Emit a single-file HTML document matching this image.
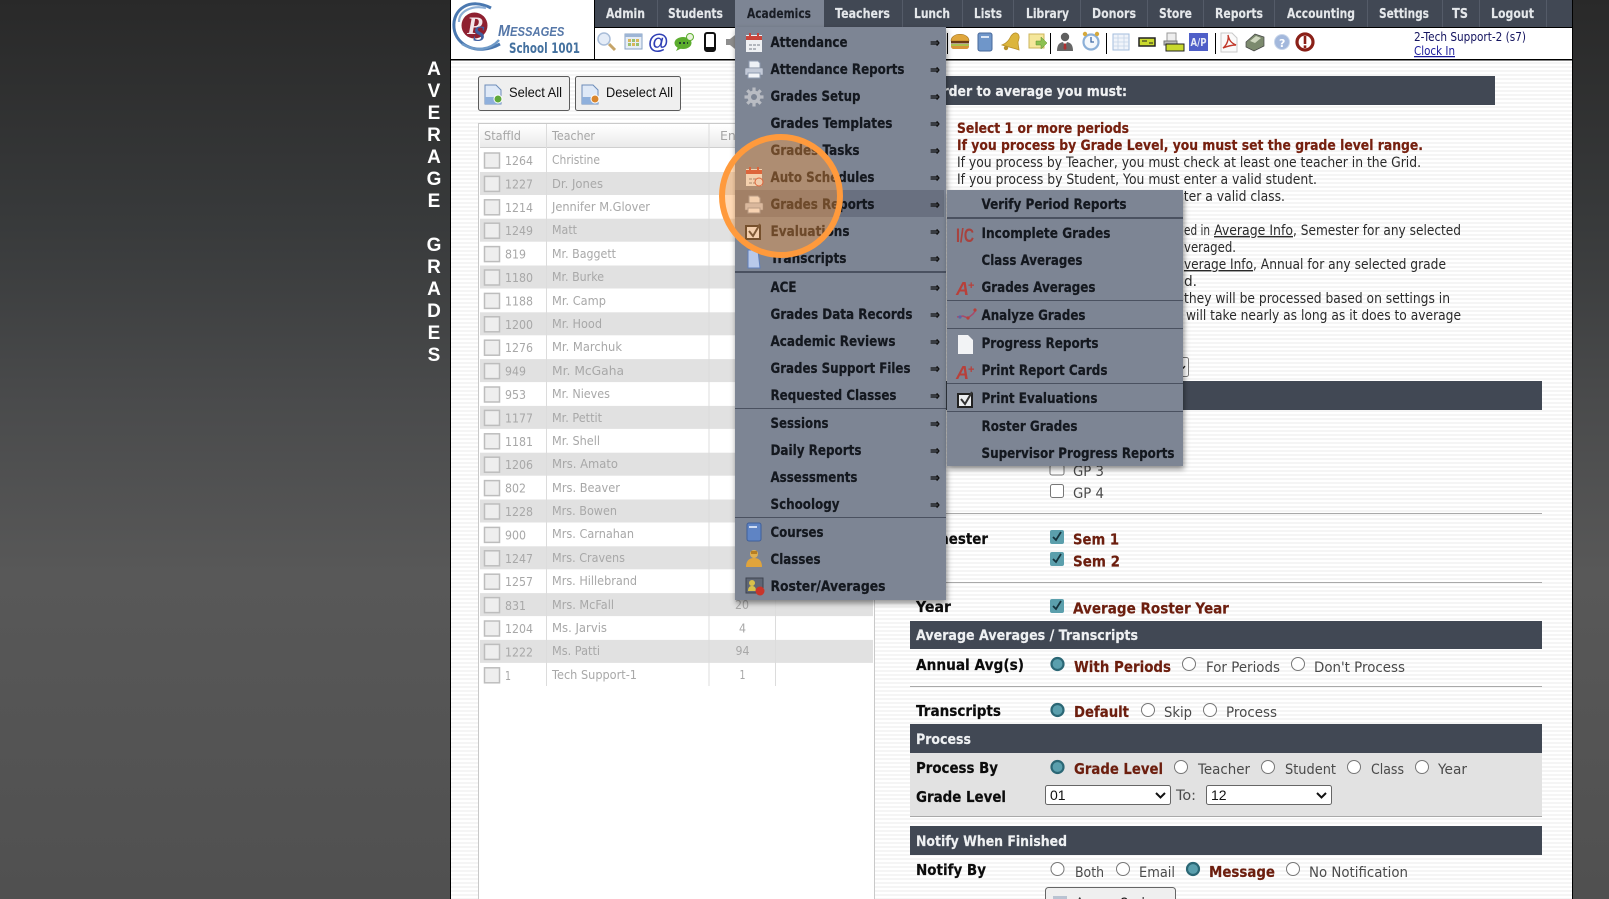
<!DOCTYPE html>
<html><head><meta charset="utf-8"><title>Average Grades</title>
<style>
html,body{margin:0;padding:0;width:1609px;height:899px;overflow:hidden;background:#333}
svg{display:block;position:absolute;left:0;top:0}
text{font-family:"DejaVu Sans","Liberation Sans",sans-serif;white-space:pre}
.nav{font-size:13.5px;font-weight:bold;fill:#e4e7ea;stroke:#e4e7ea;stroke-width:.15}
.m{font-size:14.5px;font-weight:bold;fill:#14181f;stroke:#14181f;stroke-width:.25}
.ar{font-size:13px;font-weight:bold;fill:#111;stroke:#111;stroke-width:.2}
.id{font-size:12.5px;fill:#a8a8a8}
.hd{font-size:12.5px;fill:#a6a6a6}
.b{font-size:14px;fill:#2a2a2a}
.r{font-size:14px;font-weight:bold;fill:#76200f;stroke:#76200f;stroke-width:.2}
.l{font-size:15px;font-weight:bold;fill:#0c0c0c;stroke:#0c0c0c;stroke-width:.2}
.v{font-size:15px;font-weight:bold;fill:#6c1e0e;stroke:#6c1e0e;stroke-width:.2}
.o{font-size:14px;fill:#4a4a4a}
.w{font-size:14px;font-weight:bold;fill:#eef0f2;stroke:#eef0f2;stroke-width:.2}
.side{font-family:"Liberation Sans",sans-serif;font-size:19px;font-weight:bold;fill:#fff;text-anchor:middle}
.btn{font-family:"Liberation Sans",sans-serif;font-size:14px;fill:#111}
.bar{fill:#414854}
.hr{fill:#a9a9a9}
.sep{fill:#4a5160}
.alt{fill:#e1e1e1}
.cb{fill:#eee;stroke:#bdbdbd;stroke-width:1.5}
.rad{fill:#fff;stroke:#777;stroke-width:1}
.sel{fill:#5a9fad;stroke:#2b6775;stroke-width:2.2}
.nl{fill:#545b68}
</style></head><body>
<svg width="1609" height="899" viewBox="0 0 1609 899" xmlns="http://www.w3.org/2000/svg">
<defs>
<linearGradient id="bg" x1="0" y1="0" x2="0" y2="1"><stop offset="0" stop-color="#292929"/><stop offset=".25" stop-color="#383a3b"/><stop offset=".45" stop-color="#4a4b4c"/><stop offset=".64" stop-color="#585858"/><stop offset="1" stop-color="#505050"/></linearGradient>
<linearGradient id="hg" x1="0" y1="0" x2="0" y2="1"><stop offset="0" stop-color="#fff"/><stop offset="1" stop-color="#e9e9e9"/></linearGradient>
<pattern id="st" width="4" height="4" patternUnits="userSpaceOnUse"><rect width="4" height="4" fill="#fff"/><rect y="2" width="4" height="2" fill="#f5f5f5"/></pattern>
<filter id="sh" x="-5%" y="-5%" width="112%" height="112%"><feDropShadow dx="1" dy="3" stdDeviation="3" flood-color="#000" flood-opacity=".45"/></filter>
<g id="printer"><path d="M-5-9h9l2 2v5h-11z" fill="#eef1f6" stroke="#8e9bb0"/><path d="M-8-2h16a1 1 0 0 1 1 1v6h-3v-2h-12v2h-3v-6a1 1 0 0 1 1-1z" fill="#c3cad8" stroke="#7b8494" stroke-width=".5"/><path d="M-6 3h12v5h-12z" fill="#f2f4f8" stroke="#8e9bb0"/></g>
<g id="calendar"><rect x="-8" y="-8" width="16" height="17" fill="#eef0f3"/><rect x="-8" y="-7" width="16" height="4" fill="#c9443a"/><rect x="-5" y="-10" width="2" height="4" fill="#c9443a"/><rect x="3" y="-10" width="2" height="4" fill="#c9443a"/><path d="M-5 1h3v2h-3zM-1 1h3v2h-3zM3 1h3v2h-3zM-5 5h3v2h-3zM-1 5h3v2h-3z" fill="#b2b6bd"/></g>
<g id="book"><rect x="-7" y="-9" width="14" height="18" rx="2" fill="#5f84c4" stroke="#3f5f9a"/><rect x="-5" y="-6" width="8" height="2" fill="#cfdcf3"/></g>
<g id="doc"><path d="M-8-9h11l5 5v14h-16z" fill="#dfe9f7" stroke="#6c8cb9"/><path d="M-8 3h16v7h-16z" fill="#8fb0dc"/></g>
<g id="check"><rect x="-7" y="-6" width="14" height="13" fill="#eceef0" stroke="#222" stroke-width="2"/><path d="M-4-1l4 5 7-12" fill="none" stroke="#333" stroke-width="2"/></g>
</defs>

<rect width="1609" height="899" fill="url(#bg)"/>
<rect x="450" width="1" height="899" fill="#000"/><rect x="1572" width="1" height="899" fill="#000"/>
<rect x="451" width="1121" height="899" fill="url(#st)"/>

<!-- side title -->
<g class="side"><text class="side" x="434" y="75">A</text><text class="side" x="434" y="97">V</text><text class="side" x="434" y="119">E</text><text class="side" x="434" y="141">R</text><text class="side" x="434" y="163">A</text><text class="side" x="434" y="185">G</text><text class="side" x="434" y="207">E</text><text class="side" x="434" y="251">G</text><text class="side" x="434" y="273">R</text><text class="side" x="434" y="295">A</text><text class="side" x="434" y="317">D</text><text class="side" x="434" y="339">E</text><text class="side" x="434" y="361">S</text></g>

<!-- header -->
<rect x="451" width="1121" height="59" fill="#fff"/>
<rect x="594" width="978" height="27" fill="#414854"/>
<rect x="451" y="59" width="1121" height="1.5" fill="#000"/>
<rect x="594" y="27" width="978" height="1" fill="#000"/>
<rect x="594" width="1" height="60" fill="#000"/>
<rect class="nl" x="657" width="1" height="27"/><rect class="nl" x="902" width="1" height="27"/><rect class="nl" x="962" width="1" height="27"/><rect class="nl" x="1013" width="1" height="27"/><rect class="nl" x="1080" width="1" height="27"/><rect class="nl" x="1147" width="1" height="27"/><rect class="nl" x="1203" width="1" height="27"/><rect class="nl" x="1274" width="1" height="27"/><rect class="nl" x="1367" width="1" height="27"/><rect class="nl" x="1442" width="1" height="27"/><rect class="nl" x="1479" width="1" height="27"/><rect class="nl" x="1546" width="1" height="27"/>
<text class="nav" x="606" y="18" textLength="39" lengthAdjust="spacingAndGlyphs">Admin</text>
<text class="nav" x="668" y="18" textLength="55" lengthAdjust="spacingAndGlyphs">Students</text>
<text class="nav" x="835" y="18" textLength="55" lengthAdjust="spacingAndGlyphs">Teachers</text>
<text class="nav" x="914" y="18" textLength="36" lengthAdjust="spacingAndGlyphs">Lunch</text>
<text class="nav" x="974" y="18" textLength="28" lengthAdjust="spacingAndGlyphs">Lists</text>
<text class="nav" x="1026" y="18" textLength="43" lengthAdjust="spacingAndGlyphs">Library</text>
<text class="nav" x="1092" y="18" textLength="44" lengthAdjust="spacingAndGlyphs">Donors</text>
<text class="nav" x="1159" y="18" textLength="33" lengthAdjust="spacingAndGlyphs">Store</text>
<text class="nav" x="1215" y="18" textLength="48" lengthAdjust="spacingAndGlyphs">Reports</text>
<text class="nav" x="1287" y="18" textLength="68" lengthAdjust="spacingAndGlyphs">Accounting</text>
<text class="nav" x="1379" y="18" textLength="50" lengthAdjust="spacingAndGlyphs">Settings</text>
<text class="nav" x="1452" y="18" textLength="16" lengthAdjust="spacingAndGlyphs">TS</text>
<text class="nav" x="1491" y="18" textLength="43" lengthAdjust="spacingAndGlyphs">Logout</text>

<!-- logo -->
<path d="M491 8C470-3 452 9 454 28C456 46 478 56 500 44" fill="none" stroke="#4a78b0" stroke-width="3"/>
<path d="M459 22C459 11 472 5 486 8" fill="none" stroke="#8fb0d6" stroke-width="2.2"/>
<path d="M462 44C476 52 490 50 499 40" fill="none" stroke="#6f9ac8" stroke-width="2.4"/>
<circle cx="474.5" cy="25.5" r="13" fill="#8f2030"/>
<text x="467" y="34" style="font-family:'Liberation Serif',serif;font-style:italic;font-weight:bold;font-size:25px;fill:#f4e6ea">P</text>
<text x="473" y="41" style="font-family:'Liberation Serif',serif;font-style:italic;font-weight:bold;font-size:22px;fill:#3f5fa0">S</text>
<text transform="translate(498 36) scale(.9 1)" style="font-family:'Liberation Sans',sans-serif;font-style:italic;font-weight:bold;fill:#5577a8"><tspan font-size="16">M</tspan><tspan font-size="12.5">ESSAGES</tspan></text>
<text x="509" y="53" textLength="71" lengthAdjust="spacingAndGlyphs" style="font-size:14px;font-weight:bold;fill:#44719f">School 1001</text>

<!-- toolbar icons -->
<circle cx="604" cy="39" r="6" fill="#e4ecf7" stroke="#a9bdd8" stroke-width="1.5"/><path d="M609 44l6 6" stroke="#c5a468" stroke-width="3"/>
<rect x="625" y="34" width="17" height="15" fill="#e6edf6" stroke="#8aa3c5"/><rect x="625" y="34" width="17" height="3" fill="#9db5d5"/><rect x="628" y="39" width="3" height="3" fill="#d8b65a"/><rect x="632" y="39" width="3" height="3" fill="#9ac06e"/><rect x="636" y="39" width="3" height="3" fill="#d8b65a"/><rect x="628" y="43" width="3" height="3" fill="#9ac06e"/><rect x="632" y="43" width="3" height="3" fill="#d8b65a"/><rect x="636" y="43" width="3" height="3" fill="#9ac06e"/>
<text x="648" y="49" style="font-family:'Liberation Sans',sans-serif;font-size:21px;font-weight:bold;fill:#2f3fb5">@</text>
<ellipse cx="683" cy="43" rx="8.5" ry="6" fill="#5cad2e"/><path d="M678 47l-2 4 6-3z" fill="#5cad2e"/><circle cx="690" cy="37" r="3.5" fill="#e8f3dc" stroke="#5cad2e"/><path d="M679 43h2M683 43h2M687 43h1" stroke="#123" stroke-width="1.6"/>
<rect x="705" y="33" width="10" height="18" rx="2" fill="#fff" stroke="#111" stroke-width="2"/><rect x="705" y="47" width="10" height="4" fill="#111"/>
<path d="M726 39h4l5-4v14l-5-4h-4z" fill="#8e8e8e"/>
<rect x="947" y="33" width="1" height="21" fill="#000"/><rect x="1050" y="33" width="1" height="21" fill="#000"/><rect x="1106" y="33" width="1" height="21" fill="#000"/><rect x="1215" y="33" width="1" height="21" fill="#000"/>
<path d="M951 41c0-9 18-9 18 0z" fill="#e0a63c" stroke="#9b6f1e" stroke-width=".6"/><rect x="951" y="41" width="18" height="2.5" fill="#6a3a16"/><rect x="951" y="44" width="18" height="2" fill="#a9c24e"/><path d="M951 46h18c0 3-2 3-3 3h-12c-1 0-3 0-3-3z" fill="#d7953a"/>
<rect x="978" y="33" width="14" height="18" rx="2" fill="#6f96c9" stroke="#47689a"/><rect x="981" y="36" width="8" height="2" fill="#dbe6f5"/>
<path d="M1002 45c5-2 7-5 9-9c2-3 5-4 7-2c2 2 1 5 0 8c0 3 1 6 1 8c-5-2-11-3-17-5z" fill="#dcb53c" stroke="#b88f2a" stroke-width=".8"/><circle cx="1006" cy="48" r="2.2" fill="#b8912a"/>
<rect x="1029" y="34" width="15" height="14" fill="#f5e79b" stroke="#cdb65c"/><path d="M1036 41h5v-4l6 6-6 6v-4h-5z" fill="#8cc152" stroke="#5e8f2b" stroke-width=".5"/>
<circle cx="1065" cy="37" r="4.2" fill="#5f5f5f"/><path d="M1057 51c0-8 4-9 8-9s8 1 8 9z" fill="#666"/><path d="M1063 42h4l-1 2h-2z" fill="#fff"/><path d="M1064 43.5h2l.5 5-1.5 1.5-1.5-1.5z" fill="#b03030"/>
<circle cx="1091" cy="42" r="7.5" fill="#f4f8fc" stroke="#8cb0d8" stroke-width="2.2"/><path d="M1091 37v5h3" stroke="#3f6aa5" stroke-width="1.3" fill="none"/><circle cx="1085" cy="34" r="2.2" fill="#d6a93c"/><circle cx="1097" cy="34" r="2.2" fill="#d6a93c"/>
<rect x="1113" y="34" width="16" height="16" fill="#f0f4fa" stroke="#a3bcdc"/><path d="M1113 38h16M1113 42h16M1113 46h16M1118 34v16M1124 34v16" stroke="#c3d3e8" stroke-width=".8"/>
<rect x="1139" y="38" width="16" height="8" fill="#c9d92e" stroke="#222" stroke-width="1.5"/><path d="M1142 41h5M1149 43h4" stroke="#222"/>
<rect x="1167" y="33" width="9" height="8" fill="#eee" stroke="#999"/><rect x="1164" y="41" width="13" height="4" fill="#bbb" stroke="#777"/><rect x="1166" y="44" width="18" height="7" fill="#c9d92e" stroke="#222"/>
<rect x="1189" y="33" width="19" height="18" fill="#4f5fc8"/><text x="1190.5" y="46" textLength="16" lengthAdjust="spacingAndGlyphs" style="font-size:11px;font-weight:bold;fill:#e5e9f6">A/P</text>
<path d="M1221 33h11l5 5v14h-16z" fill="#fafafa" stroke="#c9c9c9"/><path d="M1223 48c4-3 6-9 5-13c1 5 3 8 8 10c-4 0-8 1-13 3z" fill="none" stroke="#c23a2c" stroke-width="1.4"/>
<path d="M1246 42l9-8 9 3v9l-10 5-8-4z" fill="#7c8a6e" stroke="#444" stroke-width=".7"/><path d="M1250 41l6-5 5 2-6 5z" fill="#d0d8c0"/>
<circle cx="1282" cy="42" r="7.5" fill="#a3b8dc" stroke="#c9d6ea"/><text x="1279" y="47" style="font-size:11px;font-weight:bold;fill:#fff">?</text>
<circle cx="1305" cy="42" r="8" fill="#fff" stroke="#8a2018" stroke-width="3.2"/><rect x="1303.7" y="36" width="2.6" height="8" fill="#8a2018"/><rect x="1303.7" y="45.4" width="2.6" height="2.6" fill="#8a2018"/>
<text x="1414" y="41" textLength="112" lengthAdjust="spacingAndGlyphs" style="font-size:12.5px;fill:#14145f">2-Tech Support-2 (s7)</text>
<text x="1414" y="55" textLength="41" lengthAdjust="spacingAndGlyphs" style="font-size:12.5px;fill:#1a1a9a;text-decoration:underline">Clock In</text>

<!-- buttons -->
<rect x="478.5" y="76.5" width="91" height="34" rx="2" fill="#efefef" stroke="#5c5c5c"/>
<rect x="575.5" y="76.5" width="105" height="34" rx="2" fill="#efefef" stroke="#5c5c5c"/>
<use href="#doc" x="493" y="94"/><circle cx="498" cy="99" r="4" fill="#5fa83a" stroke="#fff"/>
<use href="#doc" x="590" y="94"/><circle cx="595" cy="99" r="4" fill="#d9862e" stroke="#fff"/>
<text class="btn" x="509" y="97" textLength="53" lengthAdjust="spacingAndGlyphs">Select All</text>
<text class="btn" x="606" y="97" textLength="67" lengthAdjust="spacingAndGlyphs">Deselect All</text>

<!-- grid -->
<rect x="478.5" y="123.5" width="396" height="780" fill="#fff" stroke="#c9c9c9"/>
<rect x="480" y="125" width="393" height="23" fill="url(#hg)"/>
<rect x="480" y="147" width="393" height="1" fill="#cfcfcf"/>
<rect class="alt" x="480" y="172" width="393" height="23"/><rect class="alt" x="480" y="218.7" width="393" height="23"/><rect class="alt" x="480" y="265.5" width="393" height="23"/><rect class="alt" x="480" y="312.3" width="393" height="23"/><rect class="alt" x="480" y="359.1" width="393" height="23"/><rect class="alt" x="480" y="405.9" width="393" height="23"/><rect class="alt" x="480" y="452.7" width="393" height="23"/><rect class="alt" x="480" y="499.5" width="393" height="23"/><rect class="alt" x="480" y="546.3" width="393" height="23"/><rect class="alt" x="480" y="593.1" width="393" height="23"/><rect class="alt" x="480" y="639.9" width="393" height="23"/>
<rect x="546" y="124" width="1" height="562" fill="#dcdcdc"/><rect x="708.5" y="124" width="1" height="562" fill="#dcdcdc"/><rect x="775" y="124" width="1" height="562" fill="#dcdcdc"/>
<text class="hd" x="484" y="140" textLength="37" lengthAdjust="spacingAndGlyphs">StaffId</text>
<text class="hd" x="552" y="140" textLength="43" lengthAdjust="spacingAndGlyphs">Teacher</text>
<text class="hd" x="720" y="140">En</text>
<g>
<rect class="cb" x="484.5" y="153" width="15" height="15"/><rect class="cb" x="484.5" y="176.4" width="15" height="15"/><rect class="cb" x="484.5" y="199.8" width="15" height="15"/><rect class="cb" x="484.5" y="223.2" width="15" height="15"/><rect class="cb" x="484.5" y="246.6" width="15" height="15"/><rect class="cb" x="484.5" y="270" width="15" height="15"/><rect class="cb" x="484.5" y="293.4" width="15" height="15"/><rect class="cb" x="484.5" y="316.8" width="15" height="15"/><rect class="cb" x="484.5" y="340.2" width="15" height="15"/><rect class="cb" x="484.5" y="363.6" width="15" height="15"/><rect class="cb" x="484.5" y="387" width="15" height="15"/><rect class="cb" x="484.5" y="410.4" width="15" height="15"/><rect class="cb" x="484.5" y="433.8" width="15" height="15"/><rect class="cb" x="484.5" y="457.2" width="15" height="15"/><rect class="cb" x="484.5" y="480.6" width="15" height="15"/><rect class="cb" x="484.5" y="504" width="15" height="15"/><rect class="cb" x="484.5" y="527.4" width="15" height="15"/><rect class="cb" x="484.5" y="550.8" width="15" height="15"/><rect class="cb" x="484.5" y="574.2" width="15" height="15"/><rect class="cb" x="484.5" y="597.6" width="15" height="15"/><rect class="cb" x="484.5" y="621" width="15" height="15"/><rect class="cb" x="484.5" y="644.4" width="15" height="15"/><rect class="cb" x="484.5" y="667.8" width="15" height="15"/>
</g>
<text class="id" x="505" y="165" textLength="28" lengthAdjust="spacingAndGlyphs">1264</text><text class="id" x="552" y="164" textLength="48" lengthAdjust="spacingAndGlyphs">Christine</text>
<text class="id" x="505" y="188.5" textLength="28" lengthAdjust="spacingAndGlyphs">1227</text><text class="id" x="552" y="188" textLength="51" lengthAdjust="spacingAndGlyphs">Dr. Jones</text>
<text class="id" x="505" y="212" textLength="28" lengthAdjust="spacingAndGlyphs">1214</text><text class="id" x="552" y="211" textLength="98" lengthAdjust="spacingAndGlyphs">Jennifer M.Glover</text>
<text class="id" x="505" y="235" textLength="28" lengthAdjust="spacingAndGlyphs">1249</text><text class="id" x="552" y="234" textLength="25" lengthAdjust="spacingAndGlyphs">Matt</text>
<text class="id" x="505" y="258.5" textLength="21" lengthAdjust="spacingAndGlyphs">819</text><text class="id" x="552" y="258" textLength="64" lengthAdjust="spacingAndGlyphs">Mr. Baggett</text>
<text class="id" x="505" y="282" textLength="28" lengthAdjust="spacingAndGlyphs">1180</text><text class="id" x="552" y="281" textLength="52" lengthAdjust="spacingAndGlyphs">Mr. Burke</text>
<text class="id" x="505" y="305.5" textLength="28" lengthAdjust="spacingAndGlyphs">1188</text><text class="id" x="552" y="305" textLength="54" lengthAdjust="spacingAndGlyphs">Mr. Camp</text>
<text class="id" x="505" y="329" textLength="28" lengthAdjust="spacingAndGlyphs">1200</text><text class="id" x="552" y="328" textLength="50" lengthAdjust="spacingAndGlyphs">Mr. Hood</text>
<text class="id" x="505" y="352" textLength="28" lengthAdjust="spacingAndGlyphs">1276</text><text class="id" x="552" y="351" textLength="70" lengthAdjust="spacingAndGlyphs">Mr. Marchuk</text>
<text class="id" x="505" y="375.5" textLength="21" lengthAdjust="spacingAndGlyphs">949</text><text class="id" x="552" y="375" textLength="72" lengthAdjust="spacingAndGlyphs">Mr. McGaha</text>
<text class="id" x="505" y="399" textLength="21" lengthAdjust="spacingAndGlyphs">953</text><text class="id" x="552" y="398" textLength="58" lengthAdjust="spacingAndGlyphs">Mr. Nieves</text>
<text class="id" x="505" y="422.5" textLength="28" lengthAdjust="spacingAndGlyphs">1177</text><text class="id" x="552" y="422" textLength="50" lengthAdjust="spacingAndGlyphs">Mr. Pettit</text>
<text class="id" x="505" y="446" textLength="28" lengthAdjust="spacingAndGlyphs">1181</text><text class="id" x="552" y="445" textLength="48" lengthAdjust="spacingAndGlyphs">Mr. Shell</text>
<text class="id" x="505" y="469" textLength="28" lengthAdjust="spacingAndGlyphs">1206</text><text class="id" x="552" y="468" textLength="66" lengthAdjust="spacingAndGlyphs">Mrs. Amato</text>
<text class="id" x="505" y="492.5" textLength="21" lengthAdjust="spacingAndGlyphs">802</text><text class="id" x="552" y="492" textLength="68" lengthAdjust="spacingAndGlyphs">Mrs. Beaver</text>
<text class="id" x="505" y="516" textLength="28" lengthAdjust="spacingAndGlyphs">1228</text><text class="id" x="552" y="515" textLength="65" lengthAdjust="spacingAndGlyphs">Mrs. Bowen</text>
<text class="id" x="505" y="539.5" textLength="21" lengthAdjust="spacingAndGlyphs">900</text><text class="id" x="552" y="538" textLength="82" lengthAdjust="spacingAndGlyphs">Mrs. Carnahan</text>
<text class="id" x="505" y="563" textLength="28" lengthAdjust="spacingAndGlyphs">1247</text><text class="id" x="552" y="562" textLength="73" lengthAdjust="spacingAndGlyphs">Mrs. Cravens</text>
<text class="id" x="505" y="586" textLength="28" lengthAdjust="spacingAndGlyphs">1257</text><text class="id" x="552" y="585" textLength="85" lengthAdjust="spacingAndGlyphs">Mrs. Hillebrand</text>
<text class="id" x="505" y="610" textLength="21" lengthAdjust="spacingAndGlyphs">831</text><text class="id" x="552" y="609" textLength="62" lengthAdjust="spacingAndGlyphs">Mrs. McFall</text>
<text class="id" x="505" y="633" textLength="28" lengthAdjust="spacingAndGlyphs">1204</text><text class="id" x="552" y="632" textLength="55" lengthAdjust="spacingAndGlyphs">Ms. Jarvis</text>
<text class="id" x="505" y="656.5" textLength="28" lengthAdjust="spacingAndGlyphs">1222</text><text class="id" x="552" y="655" textLength="48" lengthAdjust="spacingAndGlyphs">Ms. Patti</text>
<text class="id" x="505" y="680" textLength="6" lengthAdjust="spacingAndGlyphs">1</text><text class="id" x="552" y="679" textLength="85" lengthAdjust="spacingAndGlyphs">Tech Support-1</text>
<text class="id" x="735" y="609" textLength="14" lengthAdjust="spacingAndGlyphs">20</text>
<text class="id" x="739" y="632.5" textLength="7" lengthAdjust="spacingAndGlyphs">4</text>
<text class="id" x="735.5" y="655" textLength="14" lengthAdjust="spacingAndGlyphs">94</text>
<text class="id" x="739.5" y="679" textLength="6" lengthAdjust="spacingAndGlyphs">1</text>

<!-- right panel -->
<rect class="bar" x="910" y="76" width="585" height="29"/>
<text class="w" x="916" y="96" textLength="211" lengthAdjust="spacingAndGlyphs">In order to average you must:</text>
<text class="r" x="957" y="133" textLength="172" lengthAdjust="spacingAndGlyphs">Select 1 or more periods</text>
<text class="r" x="957" y="150" textLength="466" lengthAdjust="spacingAndGlyphs">If you process by Grade Level, you must set the grade level range.</text>
<text class="b" x="957" y="167" textLength="464" lengthAdjust="spacingAndGlyphs">If you process by Teacher, you must check at least one teacher in the Grid.</text>
<text class="b" x="957" y="184" textLength="360" lengthAdjust="spacingAndGlyphs">If you process by Student, You must enter a valid student.</text>
<text class="b" x="957" y="201" textLength="328" lengthAdjust="spacingAndGlyphs">If you process by Class, you must enter a valid class.</text>
<text class="b" x="1184" y="235" textLength="26" lengthAdjust="spacingAndGlyphs">ed in</text>
<text class="b" x="1214" y="235" textLength="79" lengthAdjust="spacingAndGlyphs" text-decoration="underline">Average Info</text>
<text class="b" x="1293" y="235" textLength="168" lengthAdjust="spacingAndGlyphs">, Semester for any selected</text>
<text class="b" x="1184" y="252" textLength="52" lengthAdjust="spacingAndGlyphs">veraged.</text>
<text class="b" x="1184" y="269" textLength="69" lengthAdjust="spacingAndGlyphs" text-decoration="underline">verage Info</text>
<text class="b" x="1253" y="269" textLength="193" lengthAdjust="spacingAndGlyphs">, Annual for any selected grade</text>
<text class="b" x="1184" y="286" textLength="13" lengthAdjust="spacingAndGlyphs">d.</text>
<text class="b" x="1184" y="303" textLength="266" lengthAdjust="spacingAndGlyphs">they will be processed based on settings in</text>
<text class="b" x="1186" y="320" textLength="275" lengthAdjust="spacingAndGlyphs">will take nearly as long as it does to average</text>
<rect x="1100" y="357.5" width="88.5" height="19" rx="2" fill="#fff" stroke="#777"/><path d="M1182 366l1.5 2 1.5-2" fill="none" stroke="#222" stroke-width="1.2"/>
<rect class="bar" x="910" y="381" width="632" height="29"/>

<rect x="1050" y="465" width="14" height="10" rx="2" fill="#fff" stroke="#777"/>
<text class="o" x="1073" y="476" textLength="31" lengthAdjust="spacingAndGlyphs">GP 3</text>
<rect x="1050.5" y="484.5" width="13" height="13" rx="2" fill="#fff" stroke="#777"/>
<text class="o" x="1073" y="498" textLength="31" lengthAdjust="spacingAndGlyphs">GP 4</text>
<rect class="hr" x="910" y="513" width="632" height="1"/>
<text class="l" x="916" y="544" textLength="72" lengthAdjust="spacingAndGlyphs">Semester</text>
<rect x="1050" y="530" width="14" height="14" rx="2" fill="#5b9fac"/><path d="M1053 537l3 3 5-8" fill="none" stroke="#16343d" stroke-width="1.8"/>
<text class="v" x="1073" y="544.5" textLength="46" lengthAdjust="spacingAndGlyphs">Sem 1</text>
<rect x="1050" y="552" width="14" height="14" rx="2" fill="#5b9fac"/><path d="M1053 559l3 3 5-8" fill="none" stroke="#16343d" stroke-width="1.8"/>
<text class="v" x="1073" y="566.5" textLength="47" lengthAdjust="spacingAndGlyphs">Sem 2</text>
<rect class="hr" x="910" y="582" width="632" height="1"/>
<text class="l" x="916" y="612" textLength="35" lengthAdjust="spacingAndGlyphs">Year</text>
<rect x="1050" y="599" width="14" height="14" rx="2" fill="#5b9fac"/><path d="M1053 606l3 3 5-8" fill="none" stroke="#16343d" stroke-width="1.8"/>
<text class="v" x="1073" y="613.5" textLength="156" lengthAdjust="spacingAndGlyphs">Average Roster Year</text>

<rect class="bar" x="910" y="621" width="632" height="28"/>
<text class="w" x="916" y="640" textLength="222" lengthAdjust="spacingAndGlyphs">Average Averages / Transcripts</text>
<text class="l" x="916" y="670" textLength="108" lengthAdjust="spacingAndGlyphs">Annual Avg(s)</text>
<circle class="sel" cx="1057.5" cy="664" r="6"/><text class="v" x="1074" y="672" textLength="97" lengthAdjust="spacingAndGlyphs">With Periods</text>
<circle class="rad" cx="1189" cy="664" r="6.5"/><text class="o" x="1206" y="672" textLength="74" lengthAdjust="spacingAndGlyphs">For Periods</text>
<circle class="rad" cx="1298" cy="664" r="6.5"/><text class="o" x="1314" y="672" textLength="91" lengthAdjust="spacingAndGlyphs">Don't Process</text>
<rect class="hr" x="910" y="686" width="632" height="1"/>
<text class="l" x="916" y="716" textLength="85" lengthAdjust="spacingAndGlyphs">Transcripts</text>
<circle class="sel" cx="1057.5" cy="710" r="6"/><text class="v" x="1074" y="717" textLength="55" lengthAdjust="spacingAndGlyphs">Default</text>
<circle class="rad" cx="1148" cy="710" r="6.5"/><text class="o" x="1164" y="717" textLength="28" lengthAdjust="spacingAndGlyphs">Skip</text>
<circle class="rad" cx="1210" cy="710" r="6.5"/><text class="o" x="1226" y="717" textLength="51" lengthAdjust="spacingAndGlyphs">Process</text>

<rect class="bar" x="910" y="724" width="632" height="29"/>
<text class="w" x="916" y="744" textLength="55" lengthAdjust="spacingAndGlyphs">Process</text>
<rect x="910" y="753" width="632" height="64" fill="#e2e2e2"/>
<text class="l" x="916" y="773" textLength="82" lengthAdjust="spacingAndGlyphs">Process By</text>
<circle class="sel" cx="1057.5" cy="767" r="6"/><text class="v" x="1074" y="774" textLength="89" lengthAdjust="spacingAndGlyphs">Grade Level</text>
<circle class="rad" cx="1181" cy="767" r="6.5"/><text class="o" x="1198" y="774" textLength="52" lengthAdjust="spacingAndGlyphs">Teacher</text>
<circle class="rad" cx="1268" cy="767" r="6.5"/><text class="o" x="1285" y="774" textLength="51" lengthAdjust="spacingAndGlyphs">Student</text>
<circle class="rad" cx="1354" cy="767" r="6.5"/><text class="o" x="1371" y="774" textLength="33" lengthAdjust="spacingAndGlyphs">Class</text>
<circle class="rad" cx="1422" cy="767" r="6.5"/><text class="o" x="1438" y="774" textLength="29" lengthAdjust="spacingAndGlyphs">Year</text>
<text class="l" x="916" y="802" textLength="90" lengthAdjust="spacingAndGlyphs">Grade Level</text>
<rect x="1045.5" y="785.5" width="125" height="19" rx="2" fill="#fff" stroke="#666"/>
<text x="1050" y="800" style="font-family:'Liberation Sans',sans-serif;font-size:14px;fill:#111">01</text>
<path d="M1156 793l4.5 4.5 4.5-4.5" fill="none" stroke="#111" stroke-width="2"/>
<text class="o" x="1176" y="800" textLength="20" lengthAdjust="spacingAndGlyphs">To:</text>
<rect x="1206.5" y="785.5" width="125" height="19" rx="2" fill="#fff" stroke="#666"/>
<text x="1211" y="800" style="font-family:'Liberation Sans',sans-serif;font-size:14px;fill:#111">12</text>
<path d="M1317 793l4.5 4.5 4.5-4.5" fill="none" stroke="#111" stroke-width="2"/>
<rect class="hr" x="910" y="816" width="632" height="1"/>

<rect class="bar" x="910" y="826" width="632" height="29"/>
<text class="w" x="916" y="846" textLength="151" lengthAdjust="spacingAndGlyphs">Notify When Finished</text>
<text class="l" x="916" y="875" textLength="70" lengthAdjust="spacingAndGlyphs">Notify By</text>
<circle class="rad" cx="1057.5" cy="869" r="6.5"/><text class="o" x="1075" y="877" textLength="29" lengthAdjust="spacingAndGlyphs">Both</text>
<circle class="rad" cx="1123" cy="869" r="6.5"/><text class="o" x="1139" y="877" textLength="36" lengthAdjust="spacingAndGlyphs">Email</text>
<circle class="sel" cx="1193" cy="869" r="6"/><text class="v" x="1209" y="877" textLength="66" lengthAdjust="spacingAndGlyphs">Message</text>
<circle class="rad" cx="1293" cy="869" r="6.5"/><text class="o" x="1309" y="877" textLength="99" lengthAdjust="spacingAndGlyphs">No Notification</text>
<rect x="1045.5" y="887.5" width="130" height="20" rx="3" fill="#efefef" stroke="#666"/>
<rect x="1053" y="896" width="14" height="10" fill="#b9c3d2"/>
<text class="btn" x="1076" y="907" textLength="80" lengthAdjust="spacingAndGlyphs">Average Grades</text>

<!-- menu -->
<rect x="735" y="0" width="89" height="27.5" fill="#7d8594"/>
<text class="nav" x="747" y="18" textLength="64" lengthAdjust="spacingAndGlyphs" style="fill:#1a1e26;stroke:#1a1e26">Academics</text>
<rect x="735" y="27" width="211" height="573" fill="#7d8594" filter="url(#sh)"/>
<rect x="735" y="190" width="209" height="27" fill="#697080"/>
<rect class="sep" x="735" y="271" width="211" height="2"/>
<rect class="sep" x="735" y="408" width="211" height="1"/>
<rect class="sep" x="735" y="517" width="211" height="1"/>
<text class="m" x="770.5" y="47" textLength="77" lengthAdjust="spacingAndGlyphs">Attendance</text>
<text class="m" x="770.5" y="74" textLength="134" lengthAdjust="spacingAndGlyphs">Attendance Reports</text>
<text class="m" x="770.5" y="101" textLength="90" lengthAdjust="spacingAndGlyphs">Grades Setup</text>
<text class="m" x="770.5" y="128" textLength="122" lengthAdjust="spacingAndGlyphs">Grades Templates</text>
<text class="m" x="770.5" y="155" textLength="89" lengthAdjust="spacingAndGlyphs">Grades Tasks</text>
<text class="m" x="770.5" y="182" textLength="104" lengthAdjust="spacingAndGlyphs">Auto Schedules</text>
<text class="m" x="770.5" y="209" textLength="104" lengthAdjust="spacingAndGlyphs">Grades Reports</text>
<text class="m" x="770.5" y="236" textLength="79" lengthAdjust="spacingAndGlyphs">Evaluations</text>
<text class="m" x="770.5" y="263" textLength="76" lengthAdjust="spacingAndGlyphs">Transcripts</text>
<text class="m" x="770.5" y="292" textLength="26" lengthAdjust="spacingAndGlyphs">ACE</text>
<text class="m" x="770.5" y="319" textLength="142" lengthAdjust="spacingAndGlyphs">Grades Data Records</text>
<text class="m" x="770.5" y="346" textLength="125" lengthAdjust="spacingAndGlyphs">Academic Reviews</text>
<text class="m" x="770.5" y="373" textLength="140" lengthAdjust="spacingAndGlyphs">Grades Support Files</text>
<text class="m" x="770.5" y="400" textLength="126" lengthAdjust="spacingAndGlyphs">Requested Classes</text>
<text class="m" x="770.5" y="428" textLength="58" lengthAdjust="spacingAndGlyphs">Sessions</text>
<text class="m" x="770.5" y="455" textLength="91" lengthAdjust="spacingAndGlyphs">Daily Reports</text>
<text class="m" x="770.5" y="482" textLength="87" lengthAdjust="spacingAndGlyphs">Assessments</text>
<text class="m" x="770.5" y="509" textLength="69" lengthAdjust="spacingAndGlyphs">Schoology</text>
<text class="m" x="770.5" y="537" textLength="53" lengthAdjust="spacingAndGlyphs">Courses</text>
<text class="m" x="770.5" y="564" textLength="50" lengthAdjust="spacingAndGlyphs">Classes</text>
<text class="m" x="770.5" y="591" textLength="115" lengthAdjust="spacingAndGlyphs">Roster/Averages</text>
<g>
<text class="ar" x="930" y="47" textLength="10" lengthAdjust="spacingAndGlyphs">⇒</text><text class="ar" x="930" y="74" textLength="10" lengthAdjust="spacingAndGlyphs">⇒</text><text class="ar" x="930" y="101" textLength="10" lengthAdjust="spacingAndGlyphs">⇒</text><text class="ar" x="930" y="128" textLength="10" lengthAdjust="spacingAndGlyphs">⇒</text><text class="ar" x="930" y="155" textLength="10" lengthAdjust="spacingAndGlyphs">⇒</text><text class="ar" x="930" y="182" textLength="10" lengthAdjust="spacingAndGlyphs">⇒</text><text class="ar" x="930" y="209" textLength="10" lengthAdjust="spacingAndGlyphs">⇒</text><text class="ar" x="930" y="236" textLength="10" lengthAdjust="spacingAndGlyphs">⇒</text><text class="ar" x="930" y="263" textLength="10" lengthAdjust="spacingAndGlyphs">⇒</text><text class="ar" x="930" y="292" textLength="10" lengthAdjust="spacingAndGlyphs">⇒</text><text class="ar" x="930" y="319" textLength="10" lengthAdjust="spacingAndGlyphs">⇒</text><text class="ar" x="930" y="346" textLength="10" lengthAdjust="spacingAndGlyphs">⇒</text><text class="ar" x="930" y="373" textLength="10" lengthAdjust="spacingAndGlyphs">⇒</text><text class="ar" x="930" y="400" textLength="10" lengthAdjust="spacingAndGlyphs">⇒</text><text class="ar" x="930" y="428" textLength="10" lengthAdjust="spacingAndGlyphs">⇒</text><text class="ar" x="930" y="455" textLength="10" lengthAdjust="spacingAndGlyphs">⇒</text><text class="ar" x="930" y="482" textLength="10" lengthAdjust="spacingAndGlyphs">⇒</text><text class="ar" x="930" y="509" textLength="10" lengthAdjust="spacingAndGlyphs">⇒</text>
</g>
<!-- menu icons -->
<use href="#calendar" x="754" y="43"/>
<use href="#printer" x="754" y="70"/>
<g transform="translate(754 97)"><path d="M0-9.5V9.5M-9.5 0H9.5M-6.7-6.7L6.7 6.7M-6.7 6.7L6.7-6.7" stroke="#b9bcc3" stroke-width="3.2"/><circle r="6.5" fill="#b9bcc3"/><circle r="3" fill="#7d8594"/></g>
<use href="#calendar" x="754" y="177"/><circle cx="759" cy="182" r="4" fill="#e8ecf2" stroke="#c9443a"/>
<use href="#printer" x="754" y="205"/>
<g transform="translate(753 232)"><use href="#check"/></g>
<path d="M748 250h10l2 18h-12z" fill="#b8c9ea" stroke="#5f7fbb"/>
<use href="#book" x="754" y="532"/>
<g transform="translate(754 559)"><circle cy="-5" r="4" fill="#e0b050"/><path d="M-8 8c0-7 4-9 8-9s8 2 8 9z" fill="#e0a43c"/><path d="M-3-8h6v3h-6z" fill="#b87f22"/></g>
<g transform="translate(754 586)"><rect x="-8" y="-8" width="17" height="15" fill="#5f6675" stroke="#3e4450"/><circle cx="-2" cy="-3" r="3" fill="#d8c04a"/><path d="M-6 5c0-4 2-5 4-5s4 1 4 5z" fill="#d8c04a"/><circle cx="6" cy="5" r="4.5" fill="#c8352a"/></g>

<!-- submenu -->
<rect x="947" y="190" width="236" height="276" fill="#7d8594" filter="url(#sh)"/>
<rect class="sep" x="947" y="217" width="236" height="2"/>
<rect class="sep" x="947" y="300" width="236" height="1"/>
<rect class="sep" x="947" y="328" width="236" height="1"/>
<rect class="sep" x="947" y="383" width="236" height="1"/>
<rect class="sep" x="947" y="411" width="236" height="1"/>
<text class="m" x="981.5" y="209" textLength="145" lengthAdjust="spacingAndGlyphs">Verify Period Reports</text>
<text class="m" x="981.5" y="238" textLength="129" lengthAdjust="spacingAndGlyphs">Incomplete Grades</text>
<text class="m" x="981.5" y="265" textLength="101" lengthAdjust="spacingAndGlyphs">Class Averages</text>
<text class="m" x="981.5" y="292" textLength="114" lengthAdjust="spacingAndGlyphs">Grades Averages</text>
<text class="m" x="981.5" y="320" textLength="104" lengthAdjust="spacingAndGlyphs">Analyze Grades</text>
<text class="m" x="981.5" y="348" textLength="117" lengthAdjust="spacingAndGlyphs">Progress Reports</text>
<text class="m" x="981.5" y="375" textLength="126" lengthAdjust="spacingAndGlyphs">Print Report Cards</text>
<text class="m" x="981.5" y="403" textLength="116" lengthAdjust="spacingAndGlyphs">Print Evaluations</text>
<text class="m" x="981.5" y="431" textLength="96" lengthAdjust="spacingAndGlyphs">Roster Grades</text>
<text class="m" x="981.5" y="458" textLength="193" lengthAdjust="spacingAndGlyphs">Supervisor Progress Reports</text>
<text x="956" y="242" textLength="18" lengthAdjust="spacingAndGlyphs" style="font-family:'Liberation Sans',sans-serif;font-size:19px;font-weight:bold;fill:#a8423e">I/C</text>
<text x="956" y="295" style="font-family:'Liberation Sans',sans-serif;font-size:18px;font-style:italic;font-weight:bold;fill:#b8403a">A</text><text x="968" y="289" style="font-family:'Liberation Sans',sans-serif;font-size:11px;font-weight:bold;fill:#b8403a">+</text>
<path d="M957 317l6-1 5 2 5-4 3-4" fill="none" stroke="#a84a6a" stroke-width="1.5"/><circle cx="960" cy="317" r="1.6" fill="#5a62a8"/><circle cx="968" cy="318" r="1.6" fill="#b8403a"/><circle cx="975" cy="310" r="1.6" fill="#b8403a"/>
<path d="M958 335h10l5 5v14h-15z" fill="#f2f3f5"/>
<text x="956" y="379" style="font-family:'Liberation Sans',sans-serif;font-size:18px;font-style:italic;font-weight:bold;fill:#b8403a">A</text><text x="968" y="373" style="font-family:'Liberation Sans',sans-serif;font-size:11px;font-weight:bold;fill:#b8403a">+</text>
<use href="#check" x="965" y="400"/>

<!-- highlight circle -->
<circle cx="781" cy="196" r="59" fill="#ff9a3c" fill-opacity=".38" stroke="#ff9a3c" stroke-width="6"/>
</svg>
</body></html>
